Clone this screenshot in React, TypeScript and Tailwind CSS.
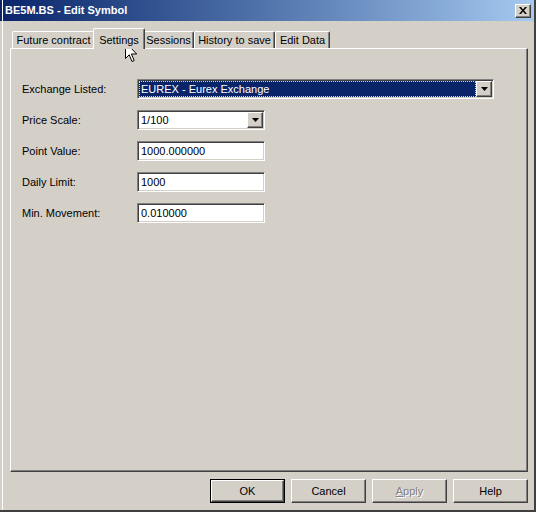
import React from 'react';

const font = "font-['Liberation_Sans',Arial,sans-serif]";

const sunken =
  'border-t border-l border-b border-r border-t-[#808080] border-l-[#808080] border-b-white border-r-white shadow-[inset_1px_1px_0_#404040,inset_-1px_-1px_0_#d4d0c8]';

const raised =
  'border-t border-l border-b border-r border-t-white border-l-white border-b-[#404040] border-r-[#404040] shadow-[inset_-1px_-1px_0_#808080]';

const DropButton: React.FC = () => (
  <div className={`w-[16px] h-[16px] bg-[#d4d0c8] flex items-center justify-center shrink-0 ${raised}`}>
    <svg width="7" height="4" viewBox="0 0 7 4">
      <path d="M0 0h7L3.5 4z" fill="#000" />
    </svg>
  </div>
);

const TextBox: React.FC<{ value: string }> = ({ value }) => (
  <div className={`w-[128px] h-[20px] bg-white flex items-center pl-[3px] text-[11px] text-black ${sunken}`}>
    {value}
  </div>
);

const Row: React.FC<{ label: string; children: React.ReactNode }> = ({ label, children }) => (
  <div className="flex items-center h-[20px]">
    <div className="w-[115px] text-[11px] text-black">{label}</div>
    {children}
  </div>
);

const tabs = [
  { name: 'Future contract', w: 'w-[83px]' },
  { name: 'Settings', w: 'w-[48px]' },
  { name: 'Sessions', w: 'w-[51px]' },
  { name: 'History to save', w: 'w-[81px]' },
  { name: 'Edit Data', w: 'w-[55px]' },
];

const Btn: React.FC<{ children: React.ReactNode; def?: boolean; disabled?: boolean }> = ({ children, def, disabled }) => (
  <div className={`w-[75px] h-[24px] ${def ? 'border border-black' : ''}`}>
    <div
      className={`h-full bg-[#d4d0c8] flex items-center justify-center text-[11px] ${raised} ${
        disabled ? 'text-[#808080] [text-shadow:1px_1px_0_#fff]' : 'text-black'
      }`}
    >
      {children}
    </div>
  </div>
);

export default function App() {
  return (
    <div className={`relative w-[536px] h-[512px] bg-[#d4d0c8] flex flex-col overflow-hidden ${font}`}>
      {/* window frame */}
      <div className="absolute left-[2px] top-0 bottom-0 w-px bg-white" />
      <div className="absolute right-0 top-0 bottom-0 w-[2px] bg-[#404040]" />
      <div className="absolute left-0 right-0 bottom-0 h-[2px] bg-[#404040]" />

      {/* title bar */}
      <div className="h-[21px] flex items-center pl-[5px] pr-[5px] bg-gradient-to-r from-[#0a246a] to-[#a6caf0]">
        <span className="text-white font-bold text-[11px]">BE5M.BS - Edit Symbol</span>
        <div className={`ml-auto w-[16px] h-[14px] bg-[#d4d0c8] flex items-center justify-center ${raised}`}>
          <svg width="8" height="7" viewBox="0 0 8 7">
            <path d="M0 0h2l2 2.5L6 0h2L5 3.5 8 7H6L4 4.5 2 7H0l3-3.5z" fill="#000" />
          </svg>
        </div>
      </div>

      {/* tabs */}
      <div className="flex items-end pl-[12px] mt-[8px] h-[19px]">
        {tabs.map((t) =>
          t.name === 'Settings' ? (
            <div
              key={t.name}
              className="relative z-10 -mx-[2px] w-[52px] h-[21px] bg-[#d4d0c8] border-t border-l border-r border-t-white border-l-white border-r-[#404040] rounded-t-[2px] shadow-[inset_-1px_0_0_#808080] flex items-start justify-center pt-[3px] text-[11px] text-black -mb-px"
            >
              {t.name}
            </div>
          ) : (
            <div
              key={t.name}
              className={`${t.w} h-[17px] bg-[#d4d0c8] border-t border-l border-r border-t-white border-l-white border-r-[#404040] rounded-t-[2px] shadow-[inset_-1px_0_0_#808080] flex items-center justify-center pt-px text-[11px] text-black`}
            >
              {t.name}
            </div>
          )
        )}
      </div>

      {/* panel */}
      <div className="ml-[10px] mr-[8px] h-[424px] border-t border-l border-b border-r border-t-white border-l-white border-b-[#404040] border-r-[#404040] shadow-[inset_-1px_-1px_0_#808080] pl-[11px] pt-[30px] flex flex-col gap-[11px]">
        <Row label="Exchange Listed:">
          <div className={`w-[357px] h-[20px] bg-white flex items-center p-px ${sunken}`}>
            <div className="flex-1 h-[16px] bg-[#0a246a] outline-1 outline-dotted outline-[#e8d890] -outline-offset-1 flex items-center pl-[2px] text-[11px] text-white">
              EUREX - Eurex Exchange
            </div>
            <DropButton />
          </div>
        </Row>
        <Row label="Price Scale:">
          <div className={`w-[128px] h-[20px] bg-white flex items-center p-px ${sunken}`}>
            <div className="flex-1 pl-[2px] text-[11px] text-black">1/100</div>
            <DropButton />
          </div>
        </Row>
        <Row label="Point Value:">
          <TextBox value="1000.000000" />
        </Row>
        <Row label="Daily Limit:">
          <TextBox value="1000" />
        </Row>
        <Row label="Min. Movement:">
          <TextBox value="0.010000" />
        </Row>
      </div>

      {/* buttons */}
      <div className="flex justify-end gap-[6px] pr-[8px] mt-[7px]">
        <Btn def>OK</Btn>
        <Btn>Cancel</Btn>
        <Btn disabled>
          <span>
            <span className="underline">A</span>pply
          </span>
        </Btn>
        <Btn>Help</Btn>
      </div>

      {/* mouse cursor */}
      <svg className="absolute left-[125px] top-[42px]" width="13" height="21" viewBox="0 0 13 21">
        <path d="M0.5 0.5v16l3.7-3.7 2.8 6.7 2.2-1-2.8-6.5h5.3z" fill="#fff" stroke="#000" strokeWidth="1" />
      </svg>
    </div>
  );
}
